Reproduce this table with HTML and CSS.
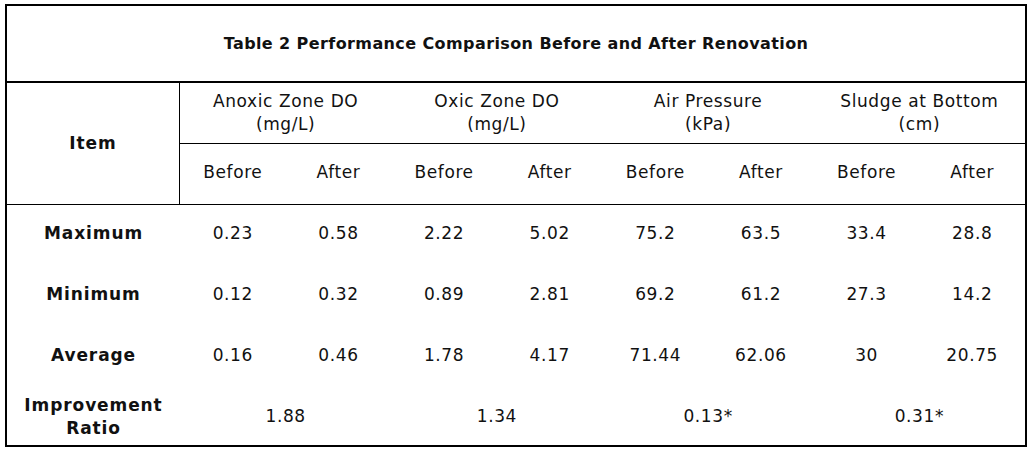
FILE: index.html
```html
<!DOCTYPE html>
<html>
<head>
<meta charset="utf-8">
<link rel="stylesheet" href="styles.css">
</head>
<body>
<table class="perf">
  <colgroup>
    <col class="c-item">
    <col><col><col><col><col><col><col><col>
  </colgroup>
  <thead>
    <tr class="r-title">
      <th colspan="9" class="title">Table 2 Performance Comparison Before and After Renovation</th>
    </tr>
    <tr class="r-group">
      <th rowspan="2" class="item">Item</th>
      <th colspan="2" class="group">Anoxic Zone DO<br>(mg/L)</th>
      <th colspan="2" class="group">Oxic Zone DO<br>(mg/L)</th>
      <th colspan="2" class="group">Air Pressure<br>(kPa)</th>
      <th colspan="2" class="group">Sludge at Bottom<br>(cm)</th>
    </tr>
    <tr class="r-sub">
      <th class="sub">Before</th><th class="sub">After</th>
      <th class="sub">Before</th><th class="sub">After</th>
      <th class="sub">Before</th><th class="sub">After</th>
      <th class="sub">Before</th><th class="sub">After</th>
    </tr>
  </thead>
  <tbody>
    <tr class="r-data">
      <th class="label">Maximum</th>
      <td>0.23</td><td>0.58</td><td>2.22</td><td>5.02</td><td>75.2</td><td>63.5</td><td>33.4</td><td>28.8</td>
    </tr>
    <tr class="r-data">
      <th class="label">Minimum</th>
      <td>0.12</td><td>0.32</td><td>0.89</td><td>2.81</td><td>69.2</td><td>61.2</td><td>27.3</td><td>14.2</td>
    </tr>
    <tr class="r-data">
      <th class="label">Average</th>
      <td>0.16</td><td>0.46</td><td>1.78</td><td>4.17</td><td>71.44</td><td>62.06</td><td>30</td><td>20.75</td>
    </tr>
    <tr class="r-data r-last">
      <th class="label">Improvement<br>Ratio</th>
      <td colspan="2">1.88</td><td colspan="2">1.34</td><td colspan="2">0.13*</td><td colspan="2">0.31*</td>
    </tr>
  </tbody>
</table>
</body>
</html>
```
FILE: styles.css
```css
html, body {
  background: #ffffff;
}
body {
  margin: 4px 0 0 5px;
  font-family: "DejaVu Sans", Verdana, sans-serif;
  color: #111111;
}
.perf {
  width: 1022px;
  table-layout: fixed;
  border-collapse: separate;
  border-spacing: 0;
  border: 2px solid #000000;
  font-size: 17px;
  letter-spacing: 0.6px;
}
.c-item {
  width: 173px;
}
.perf th,
.perf td {
  box-sizing: border-box;
  padding: 0;
  text-align: center;
  vertical-align: middle;
  line-height: 23px;
}
.perf th {
  font-weight: normal;
}
.r-title .title {
  height: 77px;
  border-bottom: 2px solid #000000;
  font-size: 16px;
  font-weight: bold;
  letter-spacing: 0.4px;
}
.perf th.item {
  border-right: 1px solid #000000;
  border-bottom: 1px solid #000000;
  font-weight: bold;
  letter-spacing: 0.9px;
}
.r-group th.group {
  height: 61px;
  border-bottom: 1px solid #000000;
}
.r-sub th.sub {
  height: 61px;
  padding-bottom: 4px;
  border-bottom: 1px solid #000000;
}
.r-data th,
.r-data td {
  height: 61px;
  padding-bottom: 5px;
}
.r-data.r-last th,
.r-data.r-last td {
  height: 57px;
  padding-bottom: 0;
}
.perf th.label {
  font-weight: bold;
  letter-spacing: 0.9px;
}
```
